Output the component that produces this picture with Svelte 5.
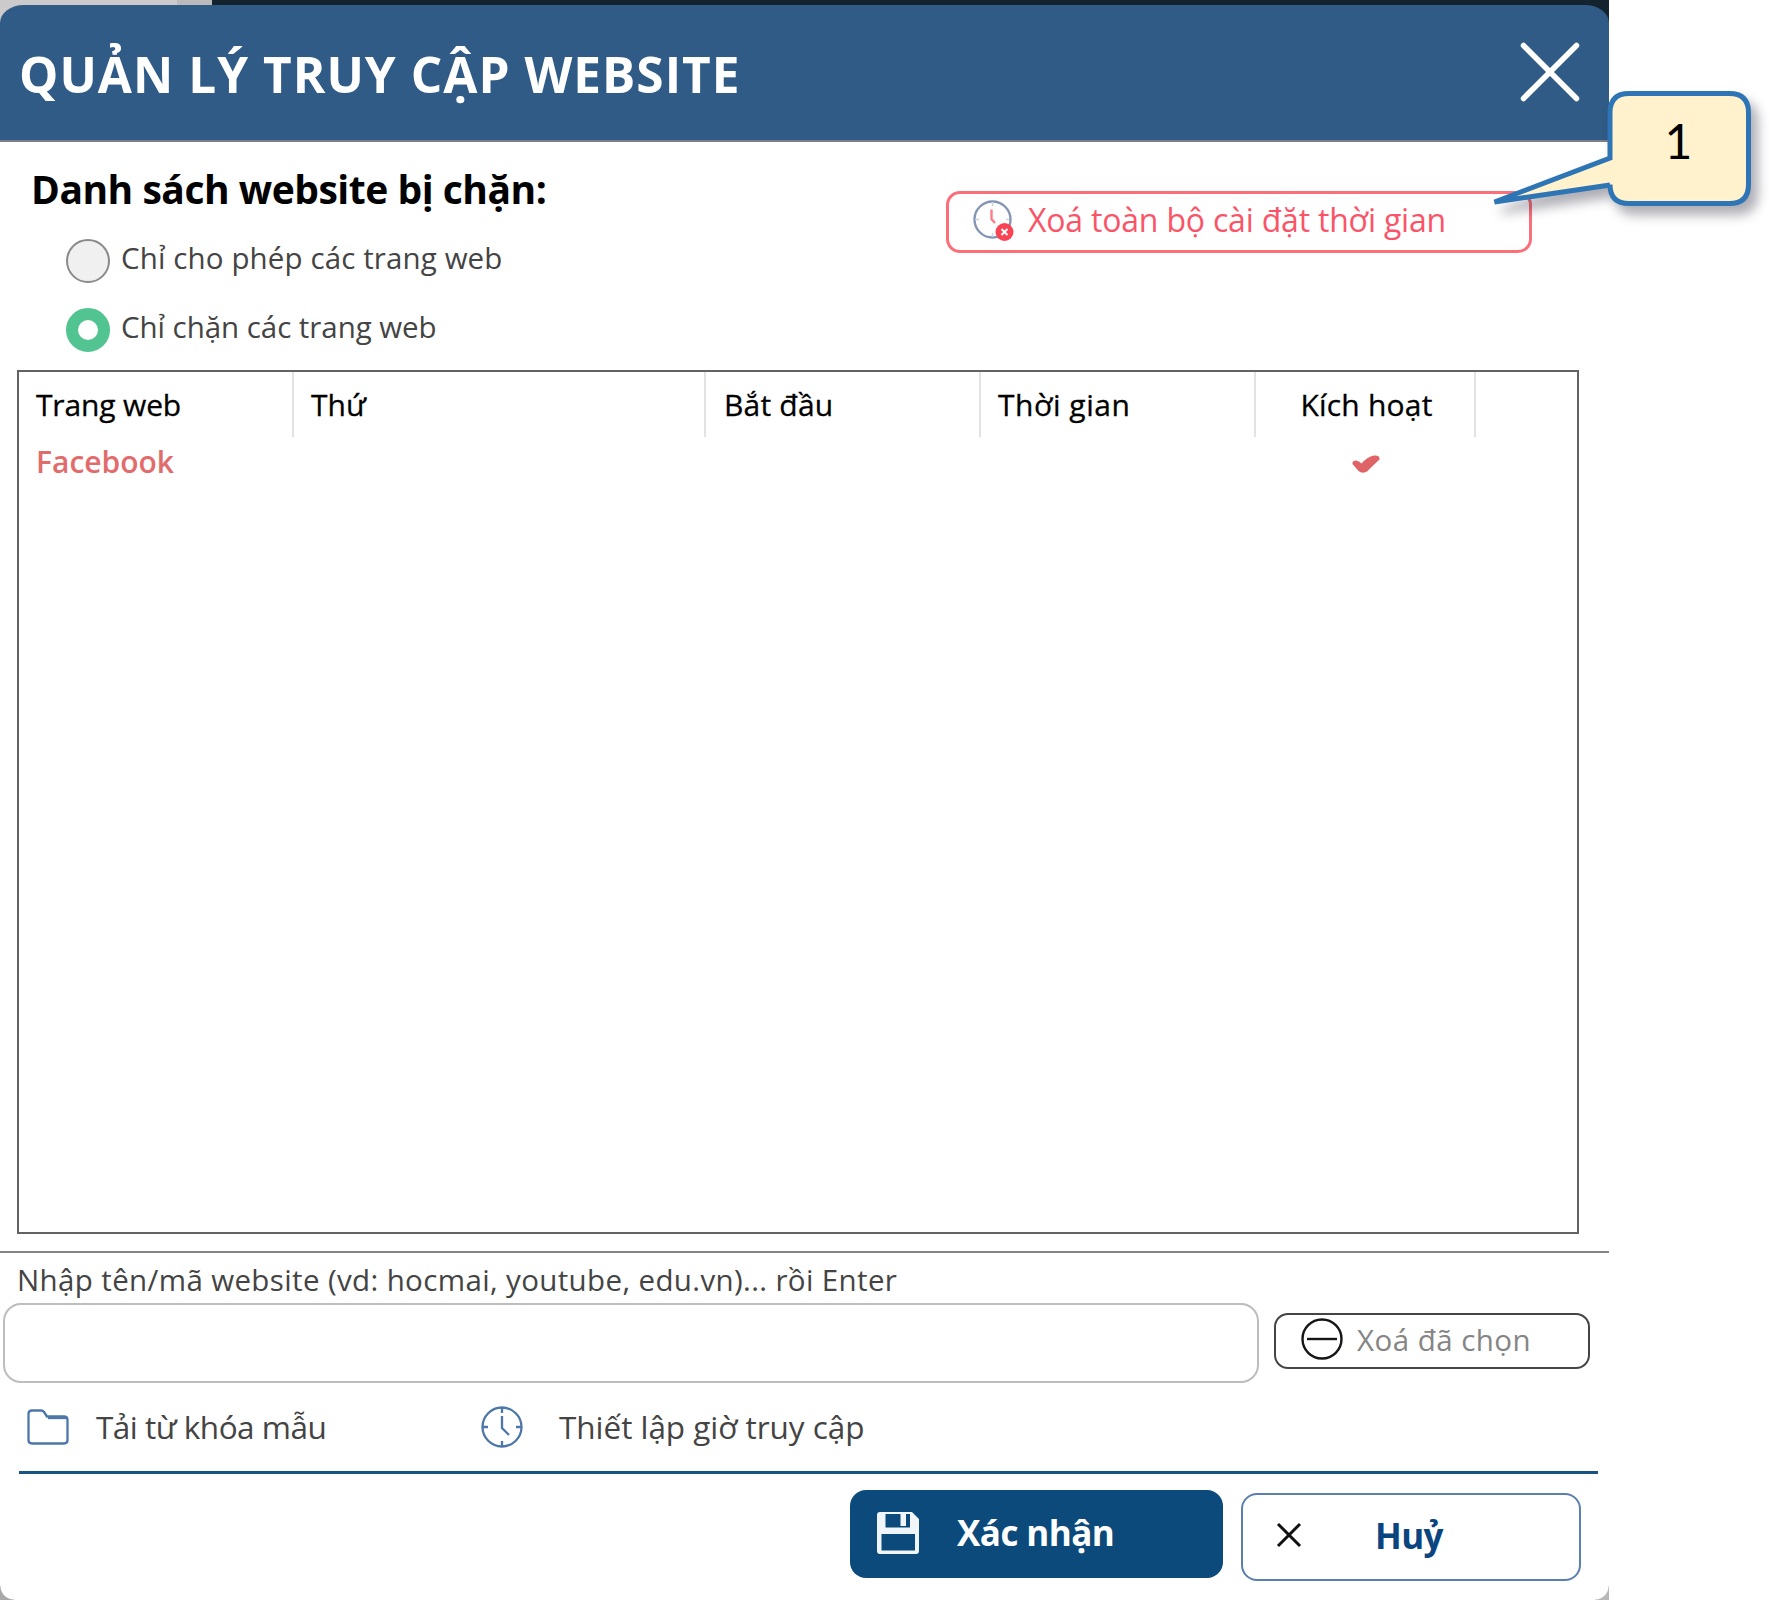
<script>
  const columns = [
    { label: 'Trang web', cls: 'site' },
    { label: 'Thứ', cls: 'day' },
    { label: 'Bắt đầu', cls: 'start' },
    { label: 'Thời gian', cls: 'time' },
    { label: 'Kích hoạt', cls: 'active' },
    { label: '', cls: 'rest' }
  ];
  const rows = [{ site: 'Facebook', active: true }];
  let mode = $state('block');
</script>

<div class="stage">
  <div class="backdrop"><span class="light"></span><span class="mid"></span></div>
  <section class="window">
    <header>
      <h1>QUẢN LÝ TRUY CẬP WEBSITE</h1>
      <svg class="close" viewBox="0 0 60 60"><path d="M3.500 3.500L56.500 56.500M56.500 3.500L3.500 56.500" /></svg>
    </header>

    <div class="top">
      <div class="modes">
        <h2>Danh sách website bị chặn:</h2>
        <label class="mode">
          <input type="radio" value="allow" bind:group={mode} /><span>Chỉ cho phép các trang web</span>
        </label>
        <label class="mode">
          <input type="radio" value="block" bind:group={mode} /><span class="tight">Chỉ chặn các trang web</span>
        </label>
      </div>
      <button class="clear">
        <svg viewBox="0 0 42 42">
          <circle cx="19.500" cy="19.500" r="18" fill="none" stroke="#8496b4" stroke-width="2.400" />
          <path d="M19.500 2v4M19.500 33v4M2 19.500h4M33 19.500h3" stroke="#c9d2e0" stroke-width="1.500" />
          <path d="M18.500 9.500V19L22 23" fill="none" stroke="#fb7d88" stroke-width="2.400" />
          <circle cx="31.500" cy="32" r="9" fill="#fa4454" />
          <path d="M28.500 29l6 6M34.500 29l-6 6" stroke="#fff" stroke-width="2" />
        </svg>
        <span>Xoá toàn bộ cài đặt thời gian</span>
      </button>
    </div>

    <div class="table">
      <div class="row head">
        {#each columns as c}<div class="cell {c.cls}">{c.label}</div>{/each}
      </div>
      {#each rows as r}
        <div class="row item">
          <div class="cell site">{r.site}</div>
          <div class="cell day"></div>
          <div class="cell start"></div>
          <div class="cell time"></div>
          <div class="cell active">
            {#if r.active}<svg viewBox="0 0 28 18"><path d="M0.500 9Q0 5.500 4 5.500Q7 6 9.500 8.500Q15 2 22 0.500Q28 0 27.500 4.500Q22 9.500 15 16.500Q10.500 19 6.500 16Z" /></svg>{/if}
          </div>
        </div>
      {/each}
    </div>

    <div class="entry">
      <label class="hint" for="site">Nhập tên/mã website (vd: hocmai, youtube, edu.vn)... rồi Enter</label>
      <div class="line">
        <input id="site" type="text" />
        <button class="remove">
          <svg viewBox="0 0 42 42"><circle cx="21" cy="21" r="19.500" /><path d="M6 21H36" /></svg>
          <span>Xoá đã chọn</span>
        </button>
      </div>
    </div>

    <div class="links">
      <a class="load" href="#load">
        <svg viewBox="0 0 42 36"><path d="M1.500 31V5Q1.500 1.500 5 1.500H14Q16 1.500 17 3L20 7.500H37Q40.500 7.500 40.500 11V31Q40.500 34.500 37 34.500H5Q1.500 34.500 1.500 31Z" /><path d="M21 9H39" /></svg>
        <span>Tải từ khóa mẫu</span>
      </a>
      <a class="hours" href="#hours">
        <svg viewBox="0 0 42 42"><circle cx="21" cy="21" r="19.500" /><path d="M21 2V7M21 35V40M2 21H7M35 21H40M21 10V22L28 29" /></svg>
        <span>Thiết lập giờ truy cập</span>
      </a>
    </div>

    <footer>
      <button class="save">
        <svg viewBox="0 0 42 42">
          <path fill-rule="evenodd" d="M3 0H35L42 7V39Q42 42 39 42H3Q0 42 0 39V3Q0 0 3 0ZM8.500 2V15.500H33V2ZM4.500 22V38.500H38V22Z" />
          <path d="M23.500 2H29V14H23.500Z" />
        </svg>
        <span>Xác nhận</span>
      </button>
      <button class="cancel">
        <svg viewBox="0 0 26 26"><path d="M2 2L24 24M24 2L2 24" /></svg>
        <span>Huỷ</span>
      </button>
    </footer>
    <i class="corner left"></i>
    <i class="corner right"></i>
  </section>

  <div class="callout">
    <svg viewBox="0 0 290 150"><path d="M150 8.500H250.500Q269.500 8.500 269.500 27.500V99.500Q269.500 118.500 250.500 118.500H150Q131 118.500 131 99.500V100L15.500 117L131 73V27.500Q131 8.500 150 8.500Z" /></svg>
    <span>1</span>
  </div>
</div>

<style>
  :global(body) { margin: 0; background: #fff; }
  .stage { position: relative; width: 1780px; height: 1600px; overflow: hidden; font-family: 'Open Sans', 'Noto Sans', sans-serif; color: #444; }
  .backdrop { position: absolute; left: 0; top: 0; width: 1609px; height: 40px; background: #14242e; display: flex; }
  .light { width: 177px; background: #cccaca; }
  .mid { width: 35px; background: #bbb9b9; }
  .window { position: relative; box-sizing: border-box; width: 1609px; height: 1600px; padding-top: 5px; display: flex; flex-direction: column; }
  header { height: 137px; box-sizing: border-box; flex: none; display: flex; align-items: center; justify-content: space-between; padding: 0 29px 0 19px; background: #305b86; border-radius: 24px 24px 0 0 / 18px 18px 0 0; border-bottom: 2px solid #7c7f88; }
  h1, h2 { margin: 0; white-space: nowrap; }
  h1 { color: #fff; font-size: 49.500px; line-height: 132px; font-weight: 700; letter-spacing: 1.030px; padding-top: 2px; }
  .close { width: 60px; height: 60px; margin-bottom: 2px; }
  .close path { stroke: #fff; stroke-width: 5.500; stroke-linecap: round; }
  .top { background: #fff; height: 228px; flex: none; display: flex; justify-content: space-between; align-items: flex-start; padding: 0 77px 0 31px; }
  .modes { padding-top: 25px; }
  h2 { font-size: 39px; line-height: 44px; color: #000; font-weight: 700; margin-bottom: 28px; letter-spacing: -0.480px; }
  .mode { display: flex; align-items: center; height: 43px; margin: 0 0 26px 35px; gap: 11px; font-size: 29.500px; white-space: nowrap; letter-spacing: 0.120px; }
  .mode span { padding-bottom: 7px; line-height: 35px; }
  .mode .tight { letter-spacing: -0.050px; }
  input[type='radio'] { appearance: none; box-sizing: border-box; width: 44px; height: 44px; margin: 0; border: 2px solid #8a8a8a; border-radius: 50%; background: #f0f0f0; }
  input[type='radio']:checked { border: 12px solid #52c491; background: #fff; }
  button { box-sizing: border-box; font: inherit; margin: 0; background: #fff; display: flex; align-items: center; white-space: nowrap; text-align: left; }
  .clear { width: 586px; height: 62px; margin-top: 49px; padding: 0 0 2px 24px; border: 3px solid #fb6f7a; border-radius: 14px; color: #fa5468; font-size: 32px; gap: 13px; letter-spacing: -0.200px; }
  .clear span { padding-bottom: 3px; }
  .clear svg { width: 42px; height: 42px; flex: none; }
  .table { box-sizing: border-box; flex: none; width: 1562px; height: 864px; margin-left: 17px; border: 2px solid #626262; background: #fff; }
  .row { display: grid; grid-template-columns: 275px 412px 275px 275px 220px 1fr; }
  .head { height: 65px; color: #000; font-size: 30px; line-height: 65px; -webkit-text-stroke: 0.300px; }
  .cell { height: 65px; box-sizing: border-box; padding-left: 17px; border-right: 2px solid #e2e2e2; white-space: nowrap; }
  .head .site { letter-spacing: -0.150px; }
  .head .start { padding-left: 18px; letter-spacing: 0.200px; }
  .head .time { letter-spacing: 0.550px; }
  .head .active { letter-spacing: 0.200px; }
  .cell.rest { border: 0; }
  .cell.active { padding-left: 3px; text-align: center; }
  .item { height: 50px; line-height: 49px; font-size: 30px; font-weight: 600; color: #e26c6c; }
  .item .cell { height: 50px; border-color: transparent; }
  .item .cell.active { padding-left: 1px; }
  .item svg { width: 28px; height: 18px; margin-top: 18px; display: inline-block; vertical-align: top; }
  .item path { fill: #df6468; }
  .entry { margin-top: 17px; border-top: 2px solid #858585; background: #fff; }
  .hint { display: block; padding: 2px 0 0 17px; font-size: 29.500px; line-height: 49px; height: 48px; white-space: nowrap; letter-spacing: 0.370px; }
  .line { display: flex; align-items: center; gap: 15px; padding-left: 3px; height: 80px; }
  #site { box-sizing: border-box; width: 1256px; height: 80px; border: 2.500px solid #bdbdbd; border-radius: 18px; background: #fff; }
  .remove { width: 316px; height: 56px; border: 2.500px solid #444; border-radius: 14px; color: #858585; font-size: 29.500px; padding: 0 0 4px 25px; gap: 14px; margin-bottom: 4px; letter-spacing: 0.450px; }
  .remove svg { width: 42px; height: 42px; fill: none; stroke: #151515; stroke-width: 2.400; }
  .links { margin: 0 11px 0 19px; height: 88px; flex: none; border-bottom: 3px solid #185486; display: flex; align-items: center; font-size: 31.500px; }
  .links a { display: flex; align-items: center; color: inherit; text-decoration: none; white-space: nowrap; }
  .links span { padding-bottom: 2px; }
  .links .load { width: 454px; padding-left: 8px; gap: 27px; letter-spacing: -0.500px; }
  .hours { gap: 36px; letter-spacing: -0.040px; }
  .links svg { fill: none; stroke: #4d77a8; stroke-width: 2.300; flex: none; }
  .load svg { width: 42px; height: 36px; }
  .hours svg { width: 42px; height: 42px; }
  footer { display: flex; justify-content: flex-end; align-items: flex-start; padding: 16px 28px 0 0; gap: 18px; font-weight: 700; font-size: 35px; }
  .save { width: 373px; height: 88px; border: 0; border-radius: 16px; background: #0b4a7a; color: #fff; padding: 0 0 3px 27px; gap: 38px; letter-spacing: -0.550px; }
  .save svg { width: 42px; height: 42px; fill: #f0f5fa; }
  .cancel { width: 340px; height: 88px; margin-top: 3px; border: 2px solid #5b7fae; border-radius: 16px; color: #0b4580; padding: 0 0 3px 33px; gap: 73px; letter-spacing: -0.600px; }
  .cancel svg { width: 26px; height: 26px; margin-bottom: 2px; stroke: #111; stroke-width: 3; }
  .corner { position: absolute; bottom: 0; width: 14px; height: 14px; }
  .left { left: 0; background: radial-gradient(circle at 100% 0, transparent 13px, #a8a8a8 14px); }
  .right { right: 0; background: radial-gradient(circle at 0 0, transparent 13px, #b8b8b8 14px); }
  .callout { position: absolute; left: 1479px; top: 85px; width: 290px; height: 150px; font-family: Lato, sans-serif; font-size: 48px; color: #000; }
  .callout svg { position: absolute; inset: 0; overflow: visible; filter: drop-shadow(7px 9px 6px rgba(20, 20, 40, 0.35)); }
  .callout path { fill: #fff2cc; stroke: #2e75b6; stroke-width: 5; }
  .callout span { position: absolute; left: 132px; width: 135px; text-align: center; top: 27px; line-height: 58px; }
</style>
